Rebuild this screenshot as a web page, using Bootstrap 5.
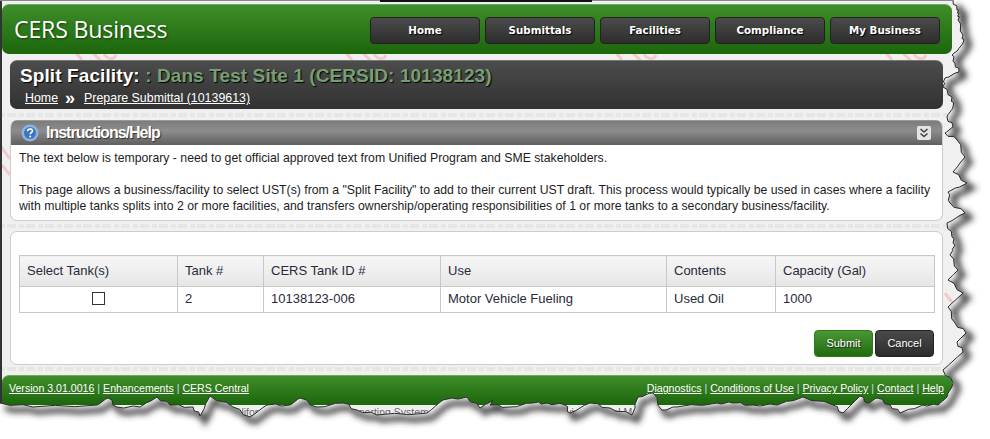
<!DOCTYPE html>
<html lang="en">
<head>
  <meta charset="UTF-8">
  <title>CERS Business - Split Facility</title>
  <link href="https://cdn.jsdelivr.net/npm/bootstrap@5.3.0/dist/css/bootstrap.min.css" rel="stylesheet">
  <style>
    html, body { height: 439px; overflow: hidden; }
    body {
      position: relative;
      font-family: "Liberation Sans", Arial, sans-serif;
      font-size: 12px;
      color: #222;
      background-color: #f0f0f0;
      background-image: url("data:image/svg+xml,%3Csvg xmlns='http://www.w3.org/2000/svg' width='270' height='439'%3E%3Cg fill='none' stroke='%23f6c9c9' stroke-width='3'%3E%3Cpath d='M72 48l10 12M90 50l12 12M104 54c4 6 10 6 12 1M0 145l10 14M2 165l8 10M135 293l12 16M140 310l10 10'/%3E%3C/g%3E%3Cg fill='none' stroke='%23e6e6e6' stroke-width='4' stroke-dasharray='5 2 9 3'%3E%3Cpath d='M0 115H270M0 226H270M0 369H270'/%3E%3C/g%3E%3C/svg%3E");
    }
    .page-wrap { padding: 4px 48px 0 2px; width: 1000px; }
    .site-head {
      height: 50px; border-radius: 7px; padding: 12px 12px 0 12px;
      background: linear-gradient(#3f8d2a, #1c660c);
      border-top: 1px solid #68ad55;
    }
    .site-title { font-family: "Open Sans", sans-serif; font-size: 23.2px; line-height: 26px; color: #fff; text-shadow: 1px 1px 2px #123d08; letter-spacing: -.2px; margin-top: -1px; }
    .main-btn {
      width: 110px; height: 27px; line-height: 25px; text-align: center; border-radius: 4px;
      border: 1px solid #222; background: linear-gradient(#4b4b4b, #2d2d2d);
      font-family: "DejaVu Sans", sans-serif; font-weight: 700; font-size: 10.3px; color: #fff;
      text-decoration: none; text-shadow: 1px 1px 1px #000;
    }
    .main-gap { gap: 5px; }
    .inner-col { margin: 0 9px 0 8px; }
    .title-panel {
      height: 49px; margin-top: 6px; border-radius: 7px; padding: 3px 10px 0;
      background: linear-gradient(#4c4c4c, #313131); border-top: 1px solid #777; color: #fff;
    }
    .title-line { font-size: 19px; line-height: 23px; font-weight: 700; text-shadow: 1px 1px 1px #000; letter-spacing: .1px; }
    .title-site { color: #76a074; }
    .crumbs { font-size: 12.4px; line-height: 18px; padding-left: 5px; margin-top: 2px; }
    .crumbs a { color: #fff; }
    .crumb-sep { font-size: 18px; font-weight: 700; margin: 0 9px 0 7px; line-height: 14px; }
    .help-panel { height: 101px; margin-top: 11px; background: #fff; border: 1px solid #ccc; border-top: 0; border-radius: 7px; overflow: hidden; }
    .help-bar {
      height: 25px; margin: 0 -1px; padding: 0 12px 0 11px; color: #fff; font-size: 16px; font-weight: 700;
      letter-spacing: -1px; text-shadow: 1px 1px 1px #333;
      background: linear-gradient(#7c7c7c, #8d8d8d 40%, #5f5f5f); border-top: 1px solid #999;
    }
    .help-icon { margin-right: 7px; }
    .help-body { padding: 5px 8px 0 8px; font-size: 12.25px; line-height: 16px; color: #1c1c24; }
    .help-body p { margin: 0 0 16px; }
    .tank-panel { height: 134px; margin-top: 10px; background: #fff; border: 1px solid #ccc; border-radius: 7px; padding: 23px 8px 0; }
    .tank-table { table-layout: fixed; width: 915px; margin: 0; font-size: 13px; color: #222; border-color: #c8c8c8; }
    .tank-table th { height: 31px; font-weight: 400; background: linear-gradient(#f6f6f6, #e6e6e6); padding: 0 7px; vertical-align: middle; color: #2a2a3a; }
    .tank-table td { height: 26px; padding: 0 7px 2px; vertical-align: middle; color: #2a2a3a; }
    .tank-check { display: block; width: 13px; height: 13px; margin: 0 auto; border: 1px solid #333; border-radius: 0; appearance: none; background: #fff; }
    .w-sel { width: 158px; } .w-num { width: 86px; } .w-id { width: 177px; }
    .w-use { width: 226px; } .w-con { width: 109px; } .w-cap { width: 159px; }
    .act-row { margin-top: 17px; gap: 2px; }
    .act-btn { width: 59px; height: 27px; line-height: 25px; padding: 0; text-align: center; border-radius: 4px; font-size: 11px; color: #fff; text-shadow: 1px 1px 1px #222; text-decoration: none; }
    .act-green { background: linear-gradient(#4b9635, #1f6c10); border: 1px solid #2c7a1a; }
    .act-dark { background: linear-gradient(#4a4a4a, #2c2c2c); border: 1px solid #222; }
    .site-foot {
      height: 30px; margin-top: 10px; padding: 0 8px 0 7px; font-size: 10.6px; line-height: 15px; color: #cde;
      background: linear-gradient(#3f8d2a, #1c660c); border-top: 1px solid #68ad55; border-radius: 7px 7px 0 0;
    }
    .site-foot a { color: #fff; }
    .foot-line { padding-top: 5px; }
    .under-foot { font-size: 10.5px; line-height: 12px; color: #666; padding: 1px 0 0 226px; white-space: nowrap; }
    .tear-layer { position: absolute; left: 0; top: 0; }
  </style>
</head>
<body>
  <div class="page-wrap">
    <div class="site-head d-flex justify-content-between">
      <div class="site-title">CERS Business</div>
      <div class="d-flex main-gap">
        <a class="main-btn" href="#">Home</a>
        <a class="main-btn" href="#">Submittals</a>
        <a class="main-btn" href="#">Facilities</a>
        <a class="main-btn" href="#">Compliance</a>
        <a class="main-btn" href="#">My Business</a>
      </div>
    </div>

    <div class="inner-col">
      <div class="title-panel">
        <div class="title-line">Split Facility: <span class="title-site">: Dans Test Site 1 (CERSID: 10138123)</span></div>
        <div class="crumbs d-flex align-items-center"><a href="#">Home</a><span class="crumb-sep">»</span><a href="#">Prepare Submittal (10139613)</a></div>
      </div>

      <div class="help-panel">
        <div class="help-bar d-flex align-items-center">
          <svg width="18" height="18" viewBox="0 0 18 18" class="help-icon">
            <circle cx="9" cy="9" r="8.5" fill="#8fb3e0"/>
            <circle cx="9" cy="9" r="6" fill="#3f74bd"/>
            <path d="M6.6 7.2c0-3 4.8-3 4.8-.2 0 1.6-2.2 1.7-2.2 3.2" fill="none" stroke="#fff" stroke-width="1.6"/>
            <circle cx="9.2" cy="12.6" r="1" fill="#fff"/>
          </svg>
          <span class="flex-grow-1">Instructions/Help</span>
          <svg width="14" height="14" viewBox="0 0 14 14">
            <rect width="14" height="14" rx="2" fill="#e4e4e4"/>
            <path d="M3.5 3l3.5 3 3.5-3M3.5 7.5l3.5 3 3.5-3" fill="none" stroke="#444" stroke-width="1.6"/>
          </svg>
        </div>
        <div class="help-body">
          <p>The text below is temporary - need to get official approved text from Unified Program and SME stakeholders.</p>
          <p>This page allows a business/facility to select UST(s) from a "Split Facility" to add to their current UST draft. This process would typically be used in cases where a facility with multiple tanks splits into 2 or more facilities, and transfers ownership/operating responsibilities of 1 or more tanks to a secondary business/facility.</p>
        </div>
      </div>

      <div class="tank-panel">
        <table class="table table-bordered tank-table">
          <colgroup>
            <col class="w-sel"><col class="w-num"><col class="w-id"><col class="w-use"><col class="w-con"><col class="w-cap">
          </colgroup>
          <thead>
            <tr><th>Select Tank(s)</th><th>Tank #</th><th>CERS Tank ID #</th><th>Use</th><th>Contents</th><th>Capacity (Gal)</th></tr>
          </thead>
          <tbody>
            <tr>
              <td><input class="tank-check" type="checkbox"></td>
              <td>2</td><td>10138123-006</td><td>Motor Vehicle Fueling</td><td>Used Oil</td><td>1000</td>
            </tr>
          </tbody>
        </table>
        <div class="d-flex justify-content-end act-row">
          <a class="act-btn act-green" href="#">Submit</a>
          <a class="act-btn act-dark" href="#">Cancel</a>
        </div>
      </div>
    </div>

    <div class="site-foot">
      <div class="foot-line d-flex justify-content-between">
        <span><a href="#">Version 3.01.0016</a> | <a href="#">Enhancements</a> | <a href="#">CERS Central</a></span>
        <span><a href="#">Diagnostics</a> | <a href="#">Conditions of Use</a> | <a href="#">Privacy Policy</a> | <a href="#">Contact</a> | <a href="#">Help</a></span>
      </div>
    </div>
    <div class="under-foot">California Environmental Reporting System, Cal/EPA and &amp; California Environmental Management</div>
  </div>

  <svg id="tear" class="tear-layer" width="990" height="439" viewBox="0 0 990 439"></svg>

  <script>
    // torn paper edge, points read off the screenshot (right side going down, then bottom going left)
    const edge = [
      [953,0],[957,10],[959,13],[958,20],[963,35],[963,43],[958,50],[952,55],[955,63],[959,72],[945,78],[943,87],
      [952,97],[953,107],[947,117],[953,127],[945,133],[957,140],[965,157],[953,172],[967,183],[948,192],[950,203],
      [965,213],[947,223],[952,237],[955,245],[950,255],[958,270],[948,280],[963,293],[948,307],[955,323],[966,333],
      [957,342],[963,352],[943,370],[953,383],[947,397],[938,405],[923,405],[900,413],[890,405],[877,398],[868,403],
      [860,396],[843,413],[833,405],[803,397],[777,405],[753,405],[733,403],[717,403],[677,407],[662,410],[653,393],
      [638,397],[632,415],[610,408],[590,403],[570,413],[565,405],[547,403],[533,403],[510,407],[490,405],[493,400],
      [480,408],[467,397],[443,400],[427,413],[377,415],[357,410],[343,403],[317,407],[300,398],[290,405],[267,405],[250,417],
      [233,407],[210,396],[200,416],[193,407],[170,405],[157,397],[140,407],[117,407],[108,398],[97,405],[33,407],[0,403]
    ];
    // small fixed jitter between the points so the line looks ripped, not straight
    const line = [];
    edge.forEach((p, i) => {
      line.push(p);
      const n = edge[i + 1];
      if (!n) return;
      const side = i % 2 ? 1 : -1;
      line.push([(p[0] * 2 + n[0]) / 3 + side, (p[1] * 2 + n[1]) / 3 - side]);
      line.push([(p[0] + n[0] * 2) / 3 - side, (p[1] + n[1] * 2) / 3 + side]);
    });
    const d = "M" + line.map(p => p.join(" ")).join("L");
    const outside = "M0 0H990V439H0Z" + d + "L0 0Z";
    document.getElementById("tear").innerHTML = `
      <defs>
        <filter id="blur" x="-5%" y="-5%" width="110%" height="110%"><feGaussianBlur stdDeviation="3"/></filter>
        <clipPath id="outer"><path clip-rule="evenodd" d="${outside}"/></clipPath>
      </defs>
      <path fill="#fff" fill-rule="evenodd" d="${outside}"/>
      <g clip-path="url(#outer)">
        <path d="${d}" fill="none" stroke="#333" stroke-width="5" filter="url(#blur)" transform="translate(5 5)"/>
      </g>
      <path d="${d}" fill="none" stroke="#2a2a2a" stroke-width="1"/>
      <rect x="0" y="0" width="2" height="403" fill="#333"/>
      <rect x="0" y="0" width="953" height="1" fill="#888"/>
      <rect x="380" y="0" width="212" height="2" fill="#111"/>`;
  </script>
  <script src="https://cdn.jsdelivr.net/npm/bootstrap@5.3.0/dist/js/bootstrap.bundle.min.js"></script>
</body>
</html>
